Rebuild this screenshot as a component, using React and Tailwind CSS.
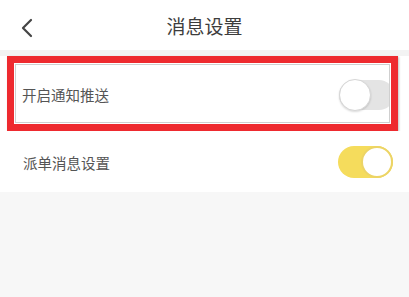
export default function App() {
  return (
    <div className="flex h-[297px] w-[409px] flex-col overflow-hidden bg-[#f7f7f7] font-['Noto_Sans_CJK_SC','Noto_Sans',sans-serif]">
      <header className="relative flex h-[50px] shrink-0 items-center justify-center bg-white">
        <svg
          className="absolute left-[20px] top-[18px]"
          width="14"
          height="20"
          viewBox="0 0 14 20"
          fill="none"
        >
          <path d="M11 2 L3 10 L11 18" stroke="#444" strokeWidth="2.2" strokeLinecap="round" strokeLinejoin="round" />
        </svg>
        <h1 className="text-[19px] leading-none text-[#3d3d3d]">消息设置</h1>
      </header>
      <div className="h-[6px] shrink-0 bg-[#f3f3f3]" />

      <div className="shrink-0 bg-white pl-[7px] pr-[11px]">
        <div className="h-[75px] border-[7px] border-[#ee2a2f] bg-white shadow-[1px_1px_2px_rgba(0,0,0,0.25)]">
          <div className="m-px flex h-[59px] items-center justify-between overflow-hidden border border-[#cfcfcf] pl-[6px]">
            <span className="mt-[2px] text-[14.5px] text-[#555]">开启通知推送</span>
            <div className="relative mr-[-5px] mt-[2px] h-[30px] w-[55px] shrink-0 rounded-full bg-[#e4e4e4]">
              <div className="absolute left-0 top-[-1px] h-[32px] w-[32px] rounded-full border border-[#d6d6d6] bg-white shadow-[0_1px_2px_rgba(0,0,0,0.15)]" />
            </div>
          </div>
        </div>
      </div>

      <div className="flex h-[61px] shrink-0 items-center justify-between bg-white pl-[23px] pr-[16px] pt-[3px]">
        <span className="text-[14.5px] text-[#555]">派单消息设置</span>
        <div className="relative mb-[2px] h-[32px] w-[55px] rounded-full bg-[#f5dc5c]">
          <div className="absolute right-0 top-0 h-[32px] w-[32px] rounded-full border-2 border-[#ecd466] bg-white" />
        </div>
      </div>
    </div>
  );
}
